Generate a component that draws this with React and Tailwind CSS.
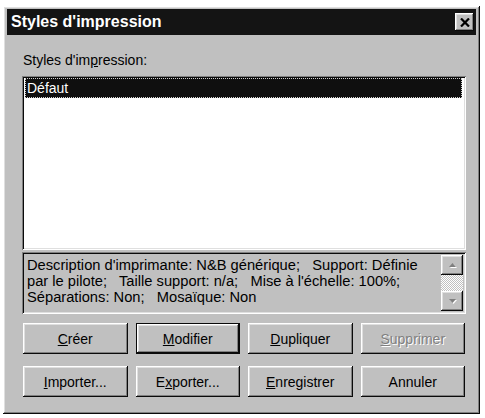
import React from "react";

const raised =
  "shadow-[inset_-1px_-1px_0_#0a0a0a,inset_1px_1px_0_#ffffff,inset_-2px_-2px_0_#808080,inset_2px_2px_0_#dfdfdf]";
const sunken =
  "shadow-[inset_1px_1px_0_#808080,inset_-1px_-1px_0_#ffffff,inset_2px_2px_0_#0a0a0a,inset_-2px_-2px_0_#dfdfdf]";

function Btn({ children, def, disabled }) {
  return (
    <div
      className={
        "h-[31px] flex items-center justify-center bg-[#c0c0c0] text-[14px] leading-[16px] " +
        (def
          ? "border border-[#0a0a0a] shadow-[inset_-1px_-1px_0_#0a0a0a,inset_1px_1px_0_#ffffff,inset_-2px_-2px_0_#808080,inset_2px_2px_0_#dfdfdf]"
          : raised) +
        (disabled ? " text-[#808080] [text-shadow:1px_1px_0_#ffffff]" : " text-black")
      }
    >
      {children}
    </div>
  );
}

function Arrow({ up }) {
  return (
    <div className={"h-[20px] bg-[#c0c0c0] flex items-center justify-center " + raised}>
      <svg width="9" height="6" viewBox="0 0 9 6">
        {up ? (
          <>
            <polygon points="4.5,1 8,5 1,5" fill="#ffffff" transform="translate(1,1)" />
            <polygon points="4.5,1 8,5 1,5" fill="#808080" />
          </>
        ) : (
          <>
            <polygon points="1,1 8,1 4.5,5" fill="#ffffff" transform="translate(1,1)" />
            <polygon points="1,1 8,1 4.5,5" fill="#808080" />
          </>
        )}
      </svg>
    </div>
  );
}

export default function App() {
  return (
    <div className="w-[485px] h-[418px] bg-white pt-[6px] pl-[3px] font-['Liberation_Sans',Arial,sans-serif]">
      <div
        className={
          "w-[477px] h-[408px] bg-[#c0c0c0] p-[3px] flex flex-col " + raised
        }
      >
        <div className="h-[26px] mx-[1px] bg-[#141414] flex items-center justify-between pl-[4px] pr-[2px]">
          <span className="text-white font-bold text-[16px] leading-[18px]">
            Styles d'impression
          </span>
          <div className={"w-[19px] h-[18px] bg-[#c0c0c0] flex items-center justify-center " + raised}>
            <svg width="10" height="9" viewBox="0 0 10 9">
              <path d="M1 0.5 L9 8.5 M9 0.5 L1 8.5" stroke="#000" strokeWidth="2.2" />
            </svg>
          </div>
        </div>

        <div className="pl-[16px] flex flex-col">
          <div className="mt-[17px] text-[14px] leading-[16px] text-black pl-[1px]">
            Styles d'im<span className="underline">p</span>ression:
          </div>

          <div className={"mt-[8px] w-[444px] h-[174px] bg-white p-[2px] " + sunken}>
            <div className="ml-[1px] mr-[2px] h-[20px] bg-[#0f0f0f] border border-dotted border-[#d0d0d0] flex items-center pl-[1px] text-white text-[14px] leading-[16px]">
              Défaut
            </div>
          </div>

          <div className={"mt-[2px] w-[444px] h-[62px] bg-[#c0c0c0] p-[2px] flex " + sunken}>
            <div className="flex-1 pl-[3px] pt-[3px] text-[14.7px] leading-[16px] text-black whitespace-pre">
              <div>Description d'imprimante: N&amp;B générique;   Support: Définie</div>
              <div>par le pilote;   Taille support: n/a;   Mise à l'échelle: 100%;</div>
              <div>Séparations: Non;   Mosaïque: Non</div>
            </div>
            <div className="w-[22px] flex flex-col py-[1px] mr-[1px]">
              <Arrow up />
              <div className="flex-1 bg-[repeating-conic-gradient(#ffffff_0%_25%,#c0c0c0_0%_50%)] bg-[length:2px_2px]" />
              <Arrow />
            </div>
          </div>

          <div className="mt-[9px] ml-[1px] w-[442px] grid grid-cols-4 gap-x-[8px] gap-y-[12px]">
            <Btn><span className="underline">C</span>réer</Btn>
            <Btn def><span className="underline">M</span>odifier</Btn>
            <Btn><span className="underline">D</span>upliquer</Btn>
            <Btn disabled><span className="underline">S</span>upprimer</Btn>
            <Btn><span className="underline">I</span>mporter...</Btn>
            <Btn>E<span className="underline">x</span>porter...</Btn>
            <Btn><span className="underline">E</span>nregistrer</Btn>
            <Btn>Annuler</Btn>
          </div>
        </div>
      </div>
    </div>
  );
}
